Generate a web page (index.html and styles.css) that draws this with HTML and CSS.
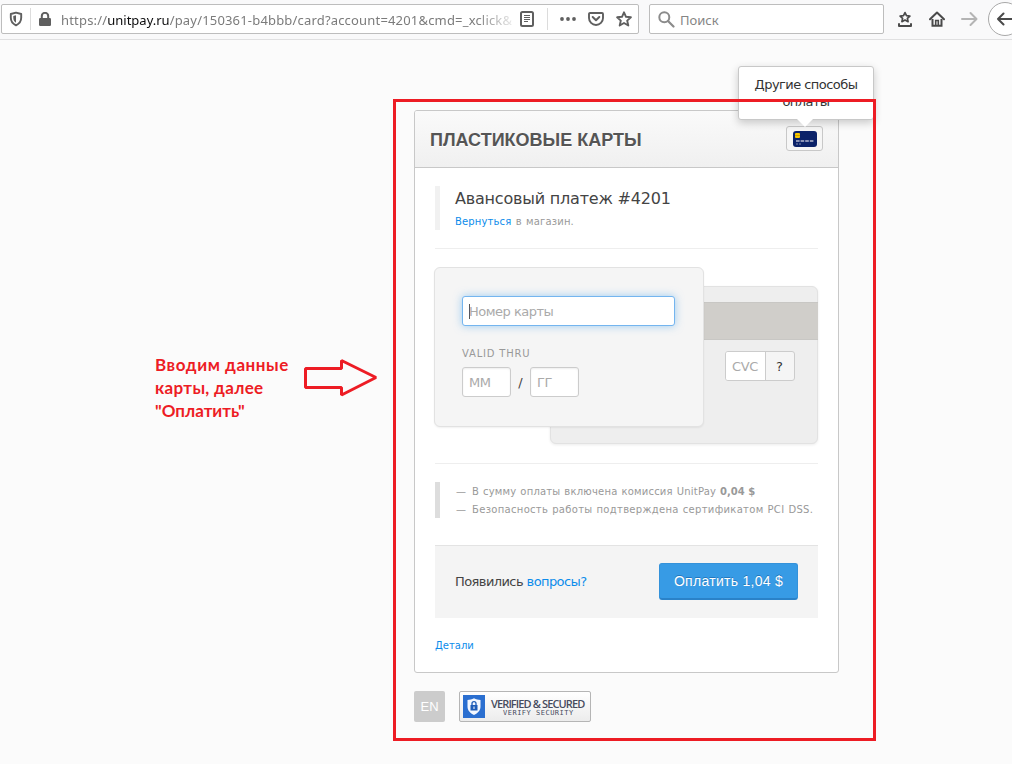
FILE: index.html
```html
<!DOCTYPE html>
<html lang="ru">
<head>
<meta charset="utf-8">
<title>UnitPay</title>
<link rel="stylesheet" href="styles.css">
</head>
<body>
<header class="toolbar">
  <div class="address">
    <svg class="ic-shield" width="14" height="16" viewBox="0 0 14 16"><path d="M7 1.600 12.200 3v3.800c0 3.600-2 6-5.200 7.600C3.800 12.800 1.800 10.400 1.800 6.800V3z" fill="none" stroke="#5f5f5f" stroke-width="1.900" stroke-linejoin="round"/><path d="M7 4.200v7.600C5.100 10.600 4.300 9 4.300 6.800V4.900z" fill="#5f5f5f"/></svg>
    <span class="sep"></span>
    <svg class="ic-lock" width="12" height="14" viewBox="0 0 12 14"><rect y="6" width="12" height="8" rx="1.200" fill="#5f5f5f"/><path d="M2.800 7V4a3.200 3.200 0 0 1 6.400 0v3" fill="none" stroke="#5f5f5f" stroke-width="2"/></svg>
    <span class="url">https://<b>unitpay.ru</b>/pay/150361-b4bbb/card?account=4201&amp;cmd=_xclick&amp;</span>
    <svg class="ic-reader" width="14" height="16" viewBox="0 0 14 16"><rect x="1" y="1" width="12" height="14" rx="1.500" fill="none" stroke="#5f5f5f" stroke-width="2"/><path d="M4 4.500h6M4 6.500h6M4 8.500h6M4 10.500h4" stroke="#5f5f5f"/></svg>
    <span class="sep sep-right"></span>
    <svg class="ic-dots" width="16" height="4" viewBox="0 0 16 4"><g fill="#5f5f5f"><circle cx="2" cy="2" r="1.900"/><circle cx="8" cy="2" r="1.900"/><circle cx="14" cy="2" r="1.900"/></g></svg>
    <svg class="ic-pocket" width="16" height="14" viewBox="0 0 16 14"><path d="M2 1h12a1 1 0 0 1 1 1v4a7 7 0 0 1-14 0V2a1 1 0 0 1 1-1z" fill="none" stroke="#5f5f5f" stroke-width="1.900"/><path d="m4.700 5 3.300 3.200L11.300 5" fill="none" stroke="#5f5f5f" stroke-width="2" stroke-linecap="round" stroke-linejoin="round"/></svg>
    <svg class="ic-star" width="16" height="16" viewBox="0 0 16 16"><path d="m8 1.300 2 4.500 4.900.5-3.700 3.300 1.100 4.900L8 12l-4.300 2.500 1.100-4.900L1.100 6.300 6 5.800z" fill="none" stroke="#5f5f5f" stroke-width="1.900" stroke-linejoin="round"/></svg>
  </div>
  <div class="search">
    <svg width="17" height="17" viewBox="0 0 17 17"><circle cx="6.300" cy="6.300" r="5" fill="none" stroke="#8b8b8b" stroke-width="2"/><path d="m10 10 5.500 5.500" stroke="#8b8b8b" stroke-width="2.200" stroke-linecap="round"/></svg>
    <span>Поиск</span>
  </div>
  <svg class="ic-tray" width="16" height="17" viewBox="0 0 16 17"><path d="m8 1.600 1.500 3.100 3.400.4-2.500 2.300.7 3.300L8 9.100l-3.100 1.600.7-3.300-2.500-2.300 3.400-.4z" fill="none" stroke="#4a4a4a" stroke-width="1.700" stroke-linejoin="round"/><path d="M2 13v1.900h12V13" fill="none" stroke="#4a4a4a" stroke-width="2" stroke-linecap="round" stroke-linejoin="round"/></svg>
  <svg class="ic-home" width="16" height="16" viewBox="0 0 16 16"><path d="M1 8.300 8 1.500l7 6.800" fill="none" stroke="#4a4a4a" stroke-width="2" stroke-linecap="round" stroke-linejoin="round"/><path d="M3.500 8v6.800h9V8" fill="none" stroke="#4a4a4a" stroke-width="2"/><path d="M6.700 14V9.500h2.600V14" fill="none" stroke="#4a4a4a" stroke-width="1.600"/></svg>
  <svg class="ic-fwd" width="17" height="16" viewBox="0 0 17 16"><path d="M1 8h14M9.500 2 15.500 8l-6 6" fill="none" stroke="#b4b4b4" stroke-width="2" stroke-linecap="round" stroke-linejoin="round"/></svg>
  <span class="back"><svg width="17" height="16" viewBox="0 0 17 16"><path d="M16 8H2M7.500 2.500 2 8l5.500 5.500" fill="none" stroke="#4a4a4a" stroke-width="2" stroke-linecap="round" stroke-linejoin="round"/></svg></span>
</header>

<main class="page">
  <section class="panel">
    <div class="panel-head">
      <h1>ПЛАСТИКОВЫЕ КАРТЫ</h1>
      <div class="methods">
        <svg width="24" height="16" viewBox="0 0 24 16"><rect width="24" height="16" rx="3" fill="#0b2269"/><rect x="2" y="2" width="5" height="5" rx="1" fill="#f6c500"/><path d="M2 4.500h5" stroke="#b89100" stroke-width=".7"/><path d="M3 10h18" stroke="#8b93b6" stroke-width="2" stroke-dasharray="3.600 1"/><path d="M3 13h5" stroke="#7f88ad" stroke-dasharray="2 1"/></svg>
        <div class="tip"><span class="tip-first">Другие способы</span><br><span class="tip-second">оплаты</span></div>
      </div>
    </div>
    <div class="panel-body">
      <div class="order">
        <h2>Авансовый платеж #4201</h2>
        <p><a>Вернуться</a> в магазин.</p>
      </div>
      <div class="cards">
        <div class="card-front">
          <div class="field number"><i class="caret"></i><span>Номер карты</span></div>
          <div class="valid">VALID THRU</div>
          <div class="dates"><div class="field date">ММ</div><span class="slash">/</span><div class="field date">ГГ</div></div>
        </div>
        <div class="card-back">
          <div class="stripe"></div>
          <div class="cvc"><span class="cvc-in">CVC</span><span class="cvc-q">?</span></div>
        </div>
      </div>
      <ul class="notes">
        <li class="fee"><i>—</i><span>В сумму оплаты включена комиссия UnitPay <b>0,04 $</b></span></li>
        <li><i>—</i><span>Безопасность работы подтверждена сертификатом PCI DSS.</span></li>
      </ul>
      <div class="pay">
        <span class="question">Появились <a>вопросы?</a></span>
        <div class="btn">Оплатить 1,04 $</div>
      </div>
      <div class="details"><a>Детали</a></div>
    </div>
  </section>
  <div class="below">
    <span class="lang">EN</span>
    <div class="seal">
      <svg width="22" height="23" viewBox="0 0 22 23"><rect width="22" height="23" fill="#2b6fd0"/><path d="M11 3.200c2 1.300 4.300 1.700 6.500 1.700v6.600c0 4-2.700 6.800-6.500 8.500-3.800-1.700-6.500-4.500-6.500-8.500V4.900c2.200 0 4.500-.4 6.500-1.700z" fill="#f4f8ff"/><rect x="7.500" y="10" width="7" height="5.500" fill="#1f5db8"/><path d="M9 10.500V8.600a2 2 0 0 1 4 0v1.900" fill="none" stroke="#1f5db8" stroke-width="1.300"/><path d="M11 11.500v2.500" stroke="#fff"/></svg>
      <div class="seal-text"><span class="seal-title">VERIFIED &amp; SECURED</span><span class="seal-sub">VERIFY SECURITY</span></div>
    </div>
  </div>
</main>

<div class="frame"></div>
<div class="callout"><span class="line-1">Вводим данные</span><br><span class="line-2">карты, далее</span><br><span>"Оплатить"</span></div>
<svg class="arrow" width="76" height="42" viewBox="0 0 76 42"><path d="M2.500 11.500H38.500V3.500L73 20.500 38.500 38V30.500H2.500z" fill="none" stroke="#ed1c24" stroke-width="3" stroke-linejoin="bevel"/></svg>
</body>
</html>
```
FILE: styles.css
```css
* { box-sizing: border-box; }
body {
  margin: 0;
  width: 1012px;
  height: 764px;
  overflow: hidden;
  position: relative;
  background: #fbfbfb;
  color: #444;
  font-family: "DejaVu Sans", Verdana, sans-serif;
  font-size: 13px;
}
h1, h2, p, ul { margin: 0; padding: 0; font-weight: normal; }
svg { display: block; flex: none; }
span { white-space: nowrap; }
a { color: #0c8ceb; }

.toolbar {
  display: flex;
  align-items: center;
  height: 40px;
  padding-bottom: 1px;
  background: #f9f9fa;
  border-bottom: 1px solid #e0e0e1;
  overflow: hidden;
  font-family: "Noto Sans", "Open Sans", sans-serif;
}
.address, .search {
  display: flex;
  align-items: center;
  flex: none;
  height: 30px;
  background: #fff;
  border: 1px solid #bdbdbd;
  border-radius: 2px;
}
.address { width: 638px; margin-left: 1px; }
.ic-shield { margin-left: 7px; }
.sep { width: 1px; height: 22px; background: #dcdcdc; margin-left: 7px; }
.ic-lock { margin-left: 8px; }
.url {
  width: 451px;
  margin-left: 10px;
  padding-top: 1px;
  color: #7b7b7b;
  font-size: 13px;
  letter-spacing: 0.180px;
  -webkit-mask-image: linear-gradient(90deg, #000 415px, transparent 458px);
  mask-image: linear-gradient(90deg, #000 415px, transparent 458px);
}
.url b { font-weight: normal; color: #0c0c0d; letter-spacing: 0; }
.ic-reader { margin-left: 8px; }
.sep-right { margin-left: 13px; }
.ic-dots { margin-left: 12px; }
.ic-pocket { margin-left: 12px; }
.ic-star { margin-left: 12px; }
.search { width: 235px; margin-left: 10px; padding-left: 8px; color: #858585; font-size: 13px; }
.search span { margin-left: 5px; padding-top: 1px; }
.ic-tray { margin-left: 13px; }
.ic-home { margin-left: 16px; }
.ic-fwd { margin-left: 16px; }
.back {
  display: flex;
  align-items: center;
  flex: none;
  width: 34px;
  height: 34px;
  margin-left: 10px;
  padding-left: 7px;
  border: 1px solid #a9a9a9;
  border-radius: 50%;
  background: #fff;
}

.page { width: 425px; margin: 70px 0 0 414px; }
.panel { height: 563px; background: #fff; border: 1px solid #c8c8c8; border-radius: 3px; }
.panel-head {
  display: flex;
  justify-content: space-between;
  height: 57px;
  padding: 15px 15px 0;
  border-bottom: 1px solid #c8c8c8;
  border-radius: 2px 2px 0 0;
  background: linear-gradient(#fafafa, #f0f0f0);
}
.panel-head h1 { padding-top: 2px; font: bold 18px/24px "Liberation Sans", Arial, sans-serif; color: #555; text-shadow: 0 1px 0 #fff; }
.methods {
  position: relative;
  display: flex;
  align-items: center;
  justify-content: center;
  width: 37px;
  height: 25px;
  border: 1px solid #c8c8c8;
  border-radius: 3px;
  background: #f6f6f6;
}
.tip {
  position: absolute;
  left: -49px;
  top: -61px;
  width: 136px;
  height: 54px;
  padding-top: 9px;
  text-align: center;
  line-height: 17px;
  color: #333;
  background: #fff;
  border: 1px solid #c8c8c8;
  border-radius: 3px;
  box-shadow: 0 3px 8px rgba(0, 0, 0, .2);
}
.tip-first { letter-spacing: -0.550px; }
.tip-second { letter-spacing: -0.600px; }
.tip::after {
  content: "";
  position: absolute;
  left: 58px;
  top: 52px;
  border: 8px solid transparent;
  border-top-color: #fff;
  border-bottom: 0;
}

.panel-body { padding: 18px 20px 0; }
.order { height: 44px; padding-left: 15px; border-left: 5px solid #f1f1f1; }
.order h2 { font-size: 16px; line-height: 25px; letter-spacing: -0.200px; }
.order p { padding-top: 1px; font-size: 10px; line-height: 20px; color: #999; letter-spacing: 0.150px; word-spacing: 1px; }
.cards {
  display: grid;
  height: 216px;
  margin-top: 18px;
  padding-top: 18px;
  border-top: 1px solid #eee;
  border-bottom: 1px solid #eee;
}
.card-front, .card-back { grid-area: 1 / 1; border: 1px solid #e2e2e2; border-radius: 6px; }
.card-front {
  z-index: 1;
  width: 270px;
  height: 160px;
  margin-left: -1px;
  padding: 28px 27px;
  background: #f5f5f5;
  box-shadow: 0 1px 2px rgba(0, 0, 0, .06);
}
.card-back {
  width: 268px;
  height: 158px;
  margin: 19px 0 0 115px;
  padding-top: 15px;
  background: #eee;
  box-shadow: 0 1px 3px rgba(0, 0, 0, .08);
}
.field {
  display: flex;
  align-items: center;
  height: 30px;
  padding-left: 6px;
  color: #aaa;
  background: #fff;
  border: 1px solid #ccc;
  border-radius: 3px;
  box-shadow: inset 0 1px 2px rgba(0, 0, 0, .07);
}
.number { width: 213px; border-color: #74b5ef; box-shadow: 0 0 8px rgba(82, 168, 236, .55); letter-spacing: -0.500px; }
.caret { width: 1px; height: 15px; background: #555; margin-right: -1px; }
.valid { margin-top: 19px; font-size: 10px; line-height: 18px; color: #999; letter-spacing: 0.800px; }
.dates { display: flex; align-items: center; margin-top: 4px; }
.date { width: 49px; letter-spacing: -0.500px; }
.slash { width: 19px; text-align: center; }
.stripe { height: 38px; margin-right: -1px; background: #d0ceca; border: 1px solid #c8c7c4; border-width: 1px 0; }
.cvc {
  display: flex;
  width: 70px;
  height: 30px;
  margin: 11px 0 0 174px;
  line-height: 29px;
  border: 1px solid #ccc;
  border-radius: 3px;
  background: #f5f5f5;
  overflow: hidden;
}
.cvc-in { width: 40px; flex: none; padding-left: 6px; color: #aaa; background: #fff; border-right: 1px solid #ccc; letter-spacing: -0.300px; }
.cvc-q { width: 27px; text-align: center; color: #333; }
.notes {
  height: 36px;
  margin-top: 18px;
  padding: 1px 0 0 16px;
  border-left: 5px solid #ddd;
  list-style: none;
  font-size: 10px;
  line-height: 18px;
  color: #999;
  letter-spacing: 0.310px;
  word-spacing: 0.500px;
}
.notes li { display: flex; }
.notes .fee { letter-spacing: 0.210px; }
.notes b { letter-spacing: 0; word-spacing: 0; }
.notes i { width: 16px; font-style: normal; }
.pay {
  display: flex;
  align-items: flex-start;
  justify-content: space-between;
  height: 73px;
  margin-top: 27px;
  padding: 17px 20px 0;
  background: #f4f4f4;
  border-top: 1px solid #e3e3e3;
}
.question { line-height: 37px; letter-spacing: -0.580px; }
.btn {
  width: 139px;
  height: 37px;
  text-align: center;
  font: 14px/35px "Liberation Sans", Arial, sans-serif;
  letter-spacing: 0.280px;
  color: #fff;
  text-shadow: 0 -1px 0 #2478bc;
  background: #379be5;
  border: 1px solid #3492da;
  border-bottom: 2px solid #2a82c8;
  border-radius: 3px;
}
.details { margin-top: 19px; font-size: 10px; line-height: 18px; }

.below { display: flex; margin-top: 18px; }
.lang {
  width: 31px;
  height: 31px;
  margin-right: 14px;
  border-radius: 2px;
  background: #ccc;
  color: #fff;
  text-align: center;
  font: 13px/31px "Liberation Sans", Arial, sans-serif;
}
.seal {
  display: flex;
  align-items: center;
  width: 132px;
  height: 31px;
  padding-left: 3px;
  border: 1px solid #b5b5b5;
  border-radius: 2px;
  background: linear-gradient(#fff, #ececec);
}
.seal-text { display: flex; flex-direction: column; margin-left: 6px; color: #474c5e; }
.seal-title { padding-top: 1px; font: 600 11px/12px "Open Sans", sans-serif; letter-spacing: -0.880px; }
.seal-sub { margin-left: 12px; font: 7px/7px "DejaVu Sans Mono", monospace; letter-spacing: 0.500px; }

.frame { position: absolute; left: 393px; top: 99px; width: 483px; height: 642px; border: 3px solid #ed1c24; }
.callout {
  position: absolute;
  left: 155px;
  top: 353px;
  color: #ed1c24;
  font: bold 17px/23px Lato, "Open Sans", sans-serif;
}
.line-1 { letter-spacing: 0.570px; }
.line-2 { letter-spacing: 0.330px; }
.arrow { position: absolute; left: 303px; top: 357px; }
```
